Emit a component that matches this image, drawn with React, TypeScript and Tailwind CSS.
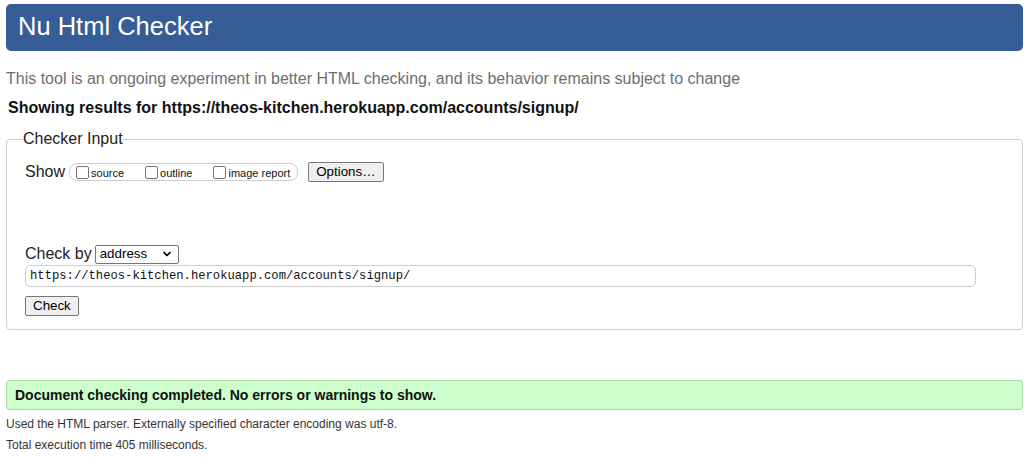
import { ChevronDown } from "lucide-react";

const FONT = "font-['Liberation_Sans',Arial,sans-serif]";

function Box({ label }: { label: string }) {
  return (
    <label className="flex items-center mr-[21px] last:mr-0">
      <span className="w-[13px] h-[13px] border border-[#767676] rounded-[2px] bg-white mr-[2px]" />
      <span className="text-[11px] leading-none text-[#111] mt-[3px]">{label}</span>
    </label>
  );
}

function Btn({ children }: { children: React.ReactNode }) {
  return (
    <button className="h-[20px] px-[7px] border border-[#767676] rounded-[2px] bg-[#efefef] text-[13.33px] leading-none text-black">
      {children}
    </button>
  );
}

export default function App() {
  return (
    <div className={`${FONT} bg-white min-h-[459px] w-[1029px] px-[6px] pt-[4px] text-black`}>
      <header className="h-[47px] rounded-[5px] bg-[#365d95] flex items-center pl-[12px] pb-[1px]">
        <h1 className="text-[25.5px] text-white leading-none">Nu Html Checker</h1>
      </header>

      <p className="mt-[18px] text-[16px] leading-[20px] text-[#6e6e6e]">
        This tool is an ongoing experiment in better HTML checking, and its behavior remains subject to change
      </p>
      <p className="mt-[9px] ml-[2px] text-[16px] leading-[20px] font-bold text-[#111]">
        Showing results for https://theos-kitchen.herokuapp.com/accounts/signup/
      </p>

      <fieldset className="mt-[11px] border border-[#cccccc] rounded-[4px] pl-[18px] pr-[46px] pb-[13px] h-[201px]">
        <legend className="ml-[-2px] px-[0px] text-[16px] leading-[20px] text-[#222]">Checker Input</legend>

        <div className="flex items-center mt-[13px] h-[20px]">
          <span className="text-[16px] text-[#222] mr-[4px]">Show</span>
          <div className="flex items-center h-[18px] border border-[#cccccc] rounded-[8px] pl-[6px] pr-[7px] mr-[10px]">
            <Box label="source" />
            <Box label="outline" />
            <Box label="image report" />
          </div>
          <Btn>Options…</Btn>
        </div>

        <div className="flex items-center mt-[62px] h-[20px]">
          <span className="text-[16px] text-[#222] mr-[3px]">Check by</span>
          <div className="flex items-center justify-between h-[19px] w-[84px] border border-[#767676] rounded-[2px] pl-[4px] pr-[5px]">
            <span className="text-[13.33px] leading-none">address</span>
            <ChevronDown size={12} strokeWidth={3.5} />
          </div>
        </div>

        <div className="mt-[1px] h-[22px] border border-[#cccccc] rounded-[5px] flex items-center pl-[4px]">
          <span className="font-['Liberation_Mono',monospace] text-[12.2px] leading-none text-[#111]">
            https://theos-kitchen.herokuapp.com/accounts/signup/
          </span>
        </div>

        <div className="mt-[6px]">
          <Btn>Check</Btn>
        </div>
      </fieldset>

      <div className="mt-[50px] h-[30px] bg-[#ccffcc] border border-[#aad4aa] rounded-[3px] flex items-center pl-[8px]">
        <span className="text-[14px] font-bold text-[#111]">Document checking completed. No errors or warnings to show.</span>
      </div>
      <p className="mt-[6px] text-[12px] leading-[16px] text-[#333]">
        Used the HTML parser. Externally specified character encoding was utf-8.
      </p>
      <p className="mt-[5px] text-[12px] leading-[16px] text-[#333]">Total execution time 405 milliseconds.</p>
    </div>
  );
}
